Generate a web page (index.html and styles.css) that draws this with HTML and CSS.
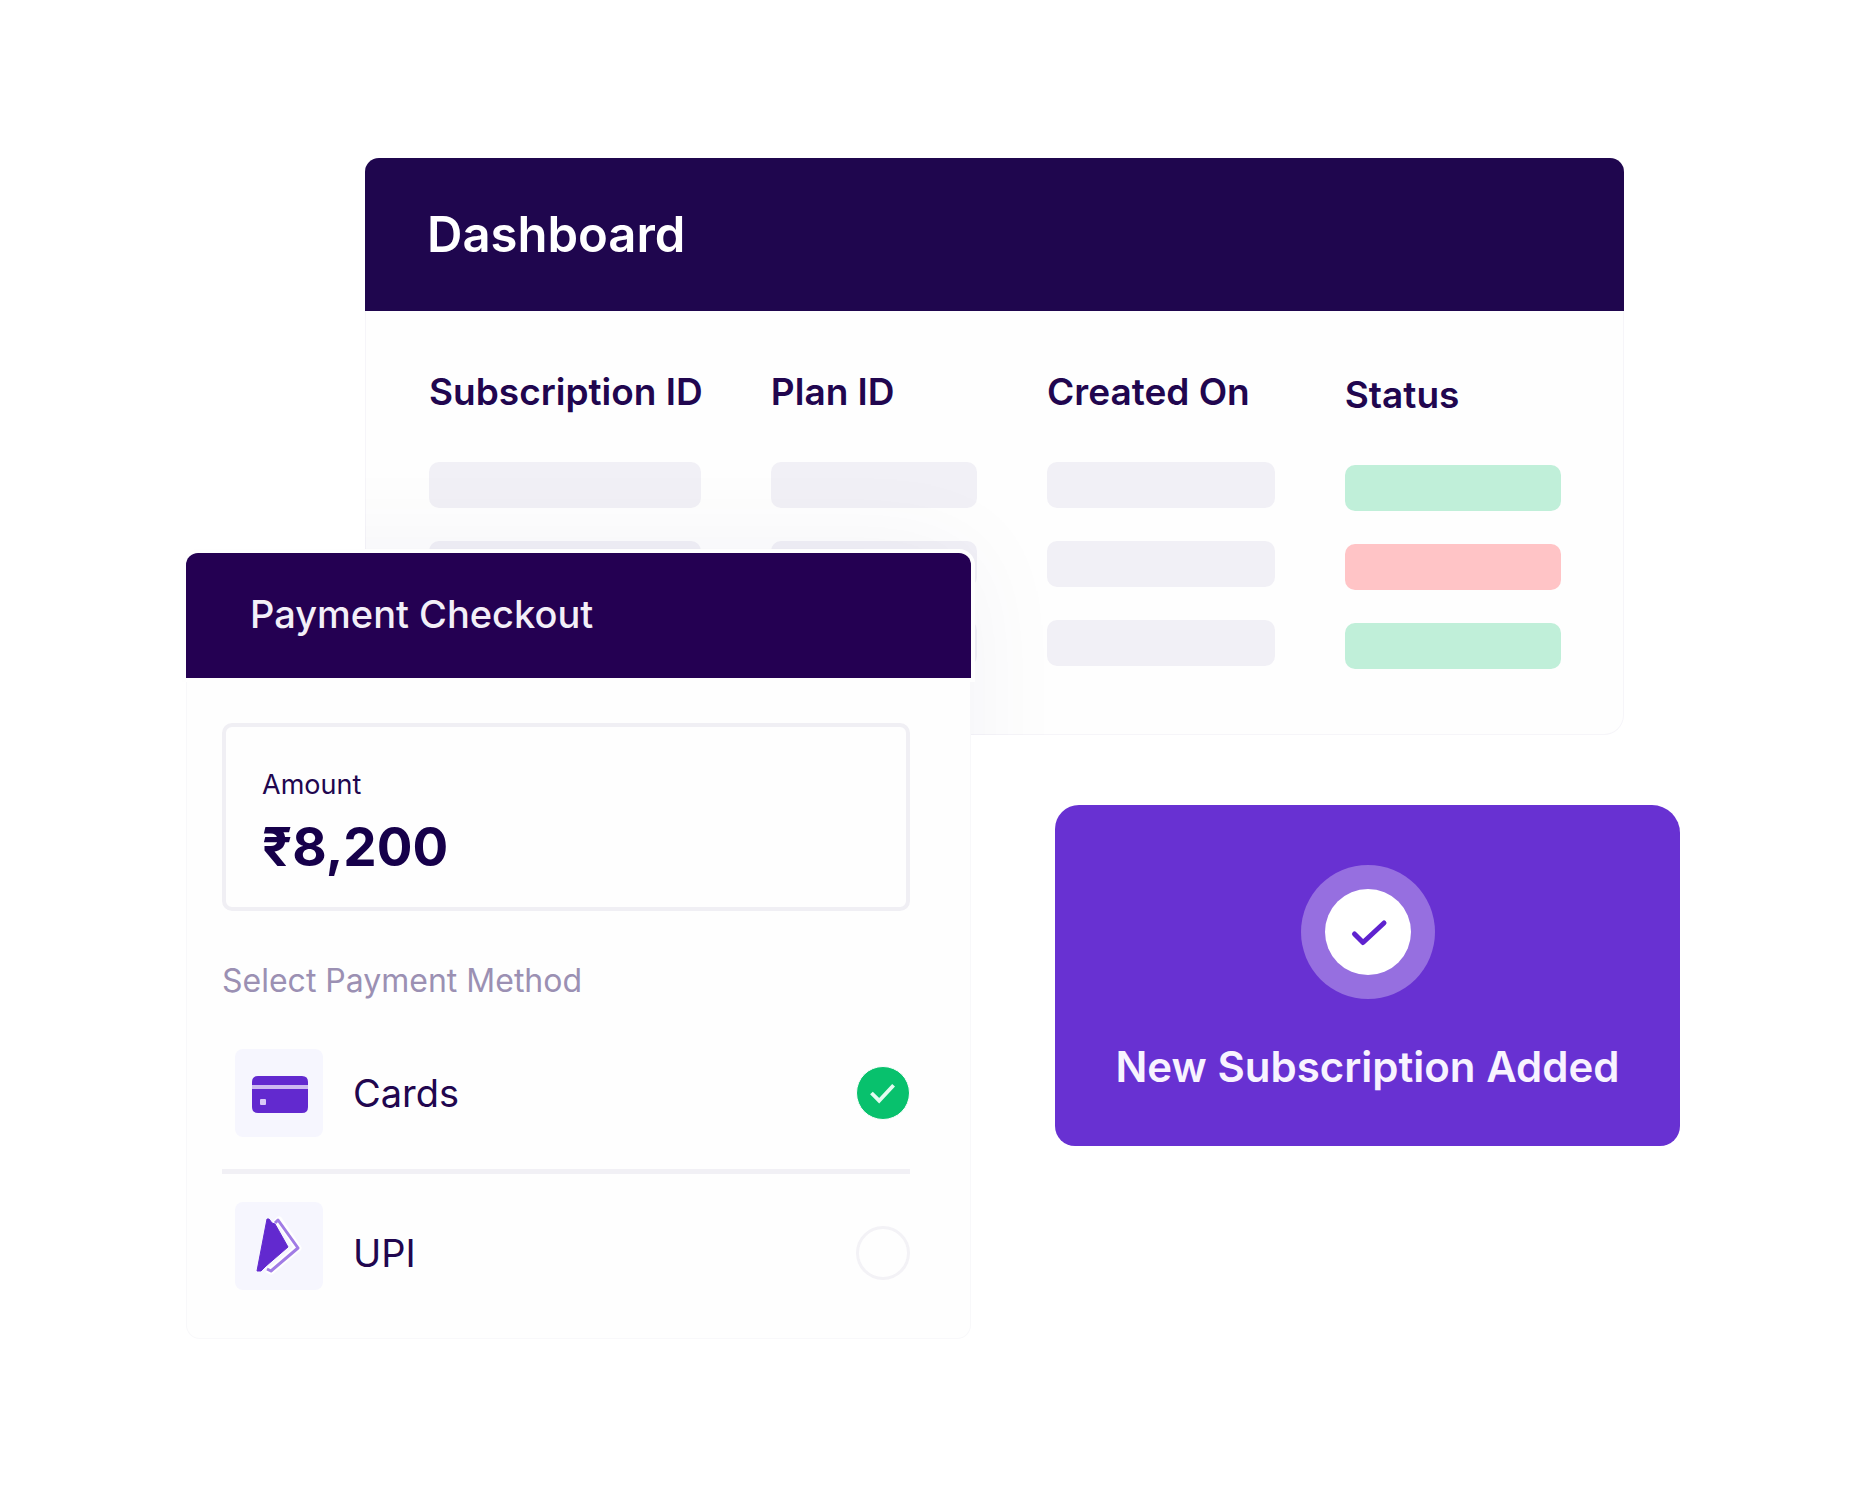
FILE: index.html
```html
<!DOCTYPE html>
<html lang="en">
<head>
  <meta charset="UTF-8">
  <meta name="viewport" content="width=device-width, initial-scale=1.0">
  <title>Subscriptions</title>
  <link rel="stylesheet" href="styles.css">
</head>
<body>
  <main class="showcase">

    <!-- Dashboard -->
    <section class="dashboard">
      <header class="dashboard-header">
        <h1>Dashboard</h1>
      </header>
      <div class="dashboard-body">
        <table class="subscriptions">
          <colgroup>
            <col class="col-id">
            <col class="col-plan">
            <col class="col-created">
            <col class="col-status">
          </colgroup>
          <thead>
            <tr>
              <th scope="col">Subscription ID</th>
              <th scope="col">Plan ID</th>
              <th scope="col">Created On</th>
              <th scope="col" class="status">Status</th>
            </tr>
          </thead>
          <tbody>
            <tr>
              <td><div class="bar"></div></td>
              <td><div class="bar"></div></td>
              <td><div class="bar"></div></td>
              <td class="status"><div class="bar green"></div></td>
            </tr>
            <tr>
              <td><div class="bar"></div></td>
              <td><div class="bar"></div></td>
              <td><div class="bar"></div></td>
              <td class="status"><div class="bar red"></div></td>
            </tr>
            <tr>
              <td><div class="bar"></div></td>
              <td><div class="bar"></div></td>
              <td><div class="bar"></div></td>
              <td class="status"><div class="bar green"></div></td>
            </tr>
          </tbody>
        </table>
      </div>
    </section>

    <!-- Payment checkout -->
    <section class="checkout">
      <header class="checkout-header">
        <h2>Payment Checkout</h2>
      </header>
      <form class="checkout-body">
        <div class="amount">
          <p class="amount-label">Amount</p>
          <p class="amount-value">₹8,200</p>
        </div>
        <fieldset class="methods">
          <legend>Select Payment Method</legend>
          <label class="method">
            <span class="method-icon">
              <svg width="88" height="88" viewBox="0 0 88 88" aria-hidden="true">
                <path d="M17 36v-3q0-6 6-6h44q6 0 6 6v3z" fill="#6229cf"/>
                <path d="M17 36h56v4H17z" fill="#cdb9f1"/>
                <path d="M17 40h56v18q0 6-6 6H23q-6 0-6-6z" fill="#6229cf"/>
                <rect x="25" y="50" width="6" height="6" rx="1" fill="#d9c9f6"/>
              </svg>
            </span>
            <span class="method-name">Cards</span>
            <input type="radio" name="method" value="cards" checked>
          </label>
          <label class="method method-upi">
            <span class="method-icon">
              <svg width="88" height="88" viewBox="0 0 88 88" aria-hidden="true">
                <path d="M40 22 44 18 63 46 36 69 32 67" fill="none" stroke="#fff" stroke-width="7" stroke-linejoin="round"/>
                <path d="M40 21 43 18 63 46 36 69 32 67" fill="none" stroke="#a17ce5" stroke-width="3" stroke-linejoin="round"/>
                <path d="M32 17 34 17 37 21 40 22 53 45 31 64 26 69 22 69z" fill="#6229cf" stroke="#6229cf" stroke-width="1" stroke-linejoin="round"/>
              </svg>
            </span>
            <span class="method-name">UPI</span>
            <input type="radio" name="method" value="upi">
          </label>
        </fieldset>
      </form>
    </section>

    <!-- Notification -->
    <section class="toast" role="status">
      <svg class="toast-icon" width="134" height="134" viewBox="0 0 134 134" aria-hidden="true">
        <circle cx="67" cy="67" r="67" fill="#966fe0"/>
        <circle cx="67" cy="67" r="43" fill="#fff"/>
        <path d="M53.500 69 62 77.500 83 58" fill="none" stroke="#5f22cf" stroke-width="5" stroke-linecap="round" stroke-linejoin="round"/>
      </svg>
      <p>New Subscription Added</p>
    </section>

  </main>
</body>
</html>
```

FILE: styles.css
```css
* {
  box-sizing: border-box;
}
body {
  margin: 0;
  background: #fff;
  color: #21064f;
  font-family: Inter, "Liberation Sans", sans-serif;
}
h1, h2, p {
  margin: 0;
}

/* The cards overlap by sharing grid tracks */
.showcase {
  display: grid;
  grid-template-columns: 186fr 179fr 606fr 84fr 569fr 56fr 180fr;
  grid-template-rows: 395px 182px 70px auto;
  align-items: start;
  padding: 158px 0;
}

/* Dashboard */
.dashboard {
  grid-column: 3 / 6;
  grid-row: 1 / 3;
  position: relative;
  overflow: hidden;
  border-radius: 14px 14px 20px 20px;
  background: #fefefe;
  box-shadow: inset 0 0 0 1px #f6f5f9;
}
/* shadow that the checkout card drops on the dashboard only */
.dashboard::after {
  content: "";
  position: absolute;
  top: 395px;
  bottom: -600px;
  left: -14%;
  width: 62%;
  box-shadow: 0 0 100px rgba(31, 6, 100, 0.05);
}
.dashboard-header {
  display: flex;
  align-items: center;
  height: 153px;
  padding: 0 62px;
  background: #1f064e;
}
.dashboard-header h1 {
  color: #fff;
  font-size: 49px;
  font-weight: 600;
  line-height: 56px;
}
.dashboard-body {
  padding: 57px 63px 36px 64px;
}
.subscriptions {
  width: 100%;
  table-layout: fixed;
  border-collapse: collapse;
}
.col-id {
  width: 30.2%;
}
.col-plan {
  width: 24.4%;
}
.col-created {
  width: 26.3%;
}
.col-status {
  width: 19.1%;
}
.subscriptions th {
  padding: 0 0 46px;
  font-size: 37px;
  font-weight: 600;
  line-height: 48px;
  text-align: left;
  vertical-align: top;
  white-space: nowrap;
}
.subscriptions td {
  padding: 0 70px 33px 0;
  vertical-align: top;
}
.subscriptions th.status {
  padding: 3px 0 43px;
}
.subscriptions td.status {
  padding: 3px 0 30px;
}
.bar {
  height: 46px;
  border-radius: 10px;
  background: #f1f0f6;
}
.bar.green {
  background: #c0efd9;
}
.bar.red {
  background: #ffc4c6;
}

/* Payment checkout */
.checkout {
  grid-column: 2 / 4;
  grid-row: 2 / 5;
  position: relative;
  border-radius: 12px 12px 14px 14px;
  background: #fefefe;
  box-shadow: inset 0 0 0 1px #f8f8fa;
}
.checkout-header {
  display: flex;
  align-items: center;
  height: 125px;
  padding: 0 64px 4px;
  border-radius: 12px 12px 0 0;
  background: #240052;
  box-shadow: 0 0 0 4px #fefefe;
}
.checkout-header h2 {
  color: #f3eff8;
  font-size: 38px;
  font-weight: 500;
}
.checkout-body {
  padding: 45px 61px 36px 36px;
}
.amount {
  padding: 40px 36px 28px;
  border: 4px solid #f0eff4;
  border-radius: 10px;
}
.amount-label {
  font-size: 27px;
  line-height: 36px;
}
.amount-value {
  margin-top: 12px;
  color: #16004a;
  font-size: 53px;
  font-weight: 700;
  line-height: 64px;
}
.methods {
  margin: 50px 0 0;
  padding: 0;
  border: 0;
  min-width: 0;
}
.methods legend {
  margin-bottom: 48px;
  padding: 0;
  color: #9b90b3;
  font-size: 32px;
  line-height: 40px;
}
.method {
  display: flex;
  align-items: center;
  padding-left: 13px;
  cursor: pointer;
}
.method-icon {
  align-self: flex-start;
  height: 88px;
  border-radius: 8px;
  background: #f6f6fe;
}
.method-name {
  flex: 1;
  margin-left: 30px;
  font-size: 38px;
  line-height: 48px;
}
.method-upi {
  min-height: 134px;
  margin-top: 32px;
  padding-top: 28px;
  border-top: 5px solid #f1f0f5;
}
.method input {
  appearance: none;
  width: 54px;
  height: 54px;
  margin: 0;
  border: 3px solid #f3f2f6;
  border-radius: 50%;
  cursor: pointer;
}
.method input:checked {
  border: 1px solid #fefefe;
  background: #08c16d url("data:image/svg+xml,%3Csvg xmlns='http://www.w3.org/2000/svg' viewBox='0 0 54 54'%3E%3Cpath d='M15 27l8 8 15-16' fill='none' stroke='%23e4fbf0' stroke-width='4'/%3E%3C/svg%3E") center / 100%;
}

/* Notification */
.toast {
  grid-column: 5 / 7;
  grid-row: 4;
  display: flex;
  flex-direction: column;
  align-items: center;
  padding: 60px 24px 51px;
  border-radius: 24px 28px 20px 20px;
  background: #6831d2;
}
.toast p {
  margin-top: 40px;
  color: #f8f3ff;
  font-size: 42px;
  font-weight: 600;
  line-height: 56px;
  white-space: nowrap;
}
```
